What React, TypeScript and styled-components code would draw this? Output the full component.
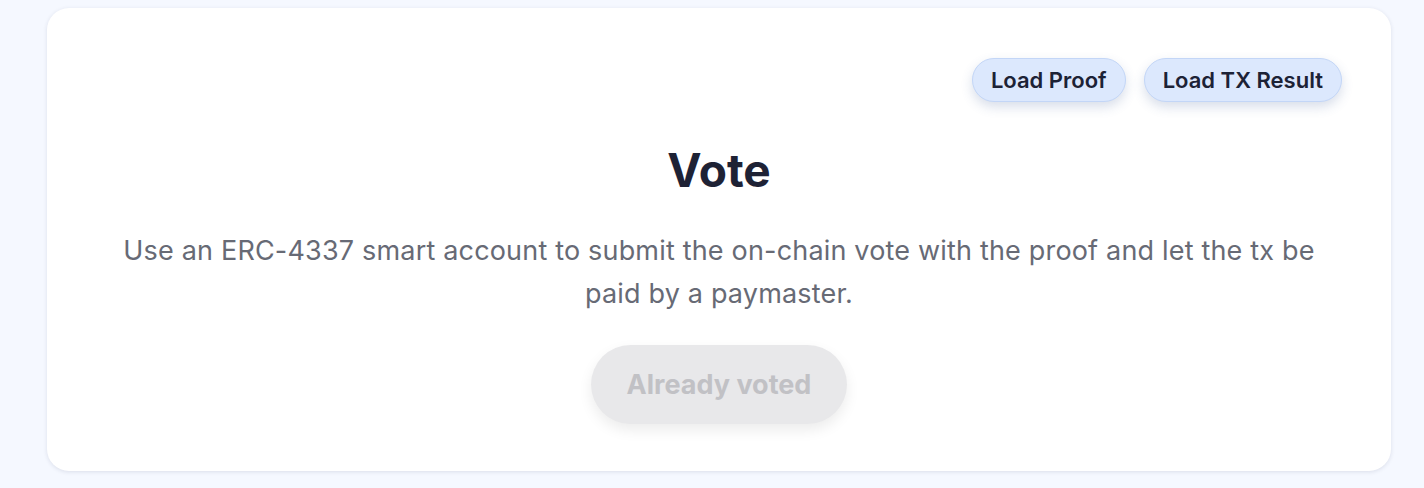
import React from "react";
import styled, { createGlobalStyle } from "styled-components";

const Global = createGlobalStyle`
  html, body { margin: 0; padding: 0; background: #f5f8ff; }
  body { font-family: Inter, "Noto Sans", sans-serif; }
`;

const Page = styled.div`
  padding: 8px 33px 16px 47px;
  box-sizing: border-box;
  width: 1424px;
`;

const Card = styled.section`
  background: #ffffff;
  border-radius: 22px;
  box-shadow: 0 1px 4px rgba(30, 40, 80, 0.12);
  padding: 50px 49px 47px;
  display: flex;
  flex-direction: column;
  align-items: center;
`;

const Toolbar = styled.div`
  align-self: stretch;
  display: flex;
  justify-content: flex-end;
  gap: 18px;
`;

const SmallButton = styled.button`
  font-family: Inter, sans-serif;
  font-size: 22px;
  font-weight: 600;
  color: #1c2236;
  background: #dce8fd;
  border: 1.5px solid #c3d6f7;
  border-radius: 999px;
  height: 44px;
  padding: 0 18px;
  box-shadow: 0 5px 12px rgba(60, 90, 150, 0.2);
  cursor: pointer;
`;

const Title = styled.h1`
  margin: 41px 0 0;
  font-size: 46px;
  font-weight: 700;
  color: #1e2235;
  line-height: 1.2;
`;

const Description = styled.p`
  margin: 31px 0 0;
  font-size: 27px;
  letter-spacing: 0.18px;
  line-height: 43px;
  color: #676a75;
  text-align: center;
  max-width: 1215px;
`;

const VoteButton = styled.button`
  margin-top: 30px;
  font-family: Inter, sans-serif;
  font-size: 27px;
  font-weight: 700;
  color: #c1c1c5;
  background: #e8e8ea;
  border: none;
  border-radius: 999px;
  height: 79px;
  padding: 0 36px;
  box-shadow: 0 6px 14px rgba(0, 0, 0, 0.08);
`;

export default function App() {
  return (
    <>
      <Global />
      <Page>
        <Card>
          <Toolbar>
            <SmallButton>Load Proof</SmallButton>
            <SmallButton>Load TX Result</SmallButton>
          </Toolbar>
          <Title>Vote</Title>
          <Description>
            Use an ERC-4337 smart account to submit the on-chain vote with the proof and let the tx be paid by a paymaster.
          </Description>
          <VoteButton disabled>Already voted</VoteButton>
        </Card>
      </Page>
    </>
  );
}
